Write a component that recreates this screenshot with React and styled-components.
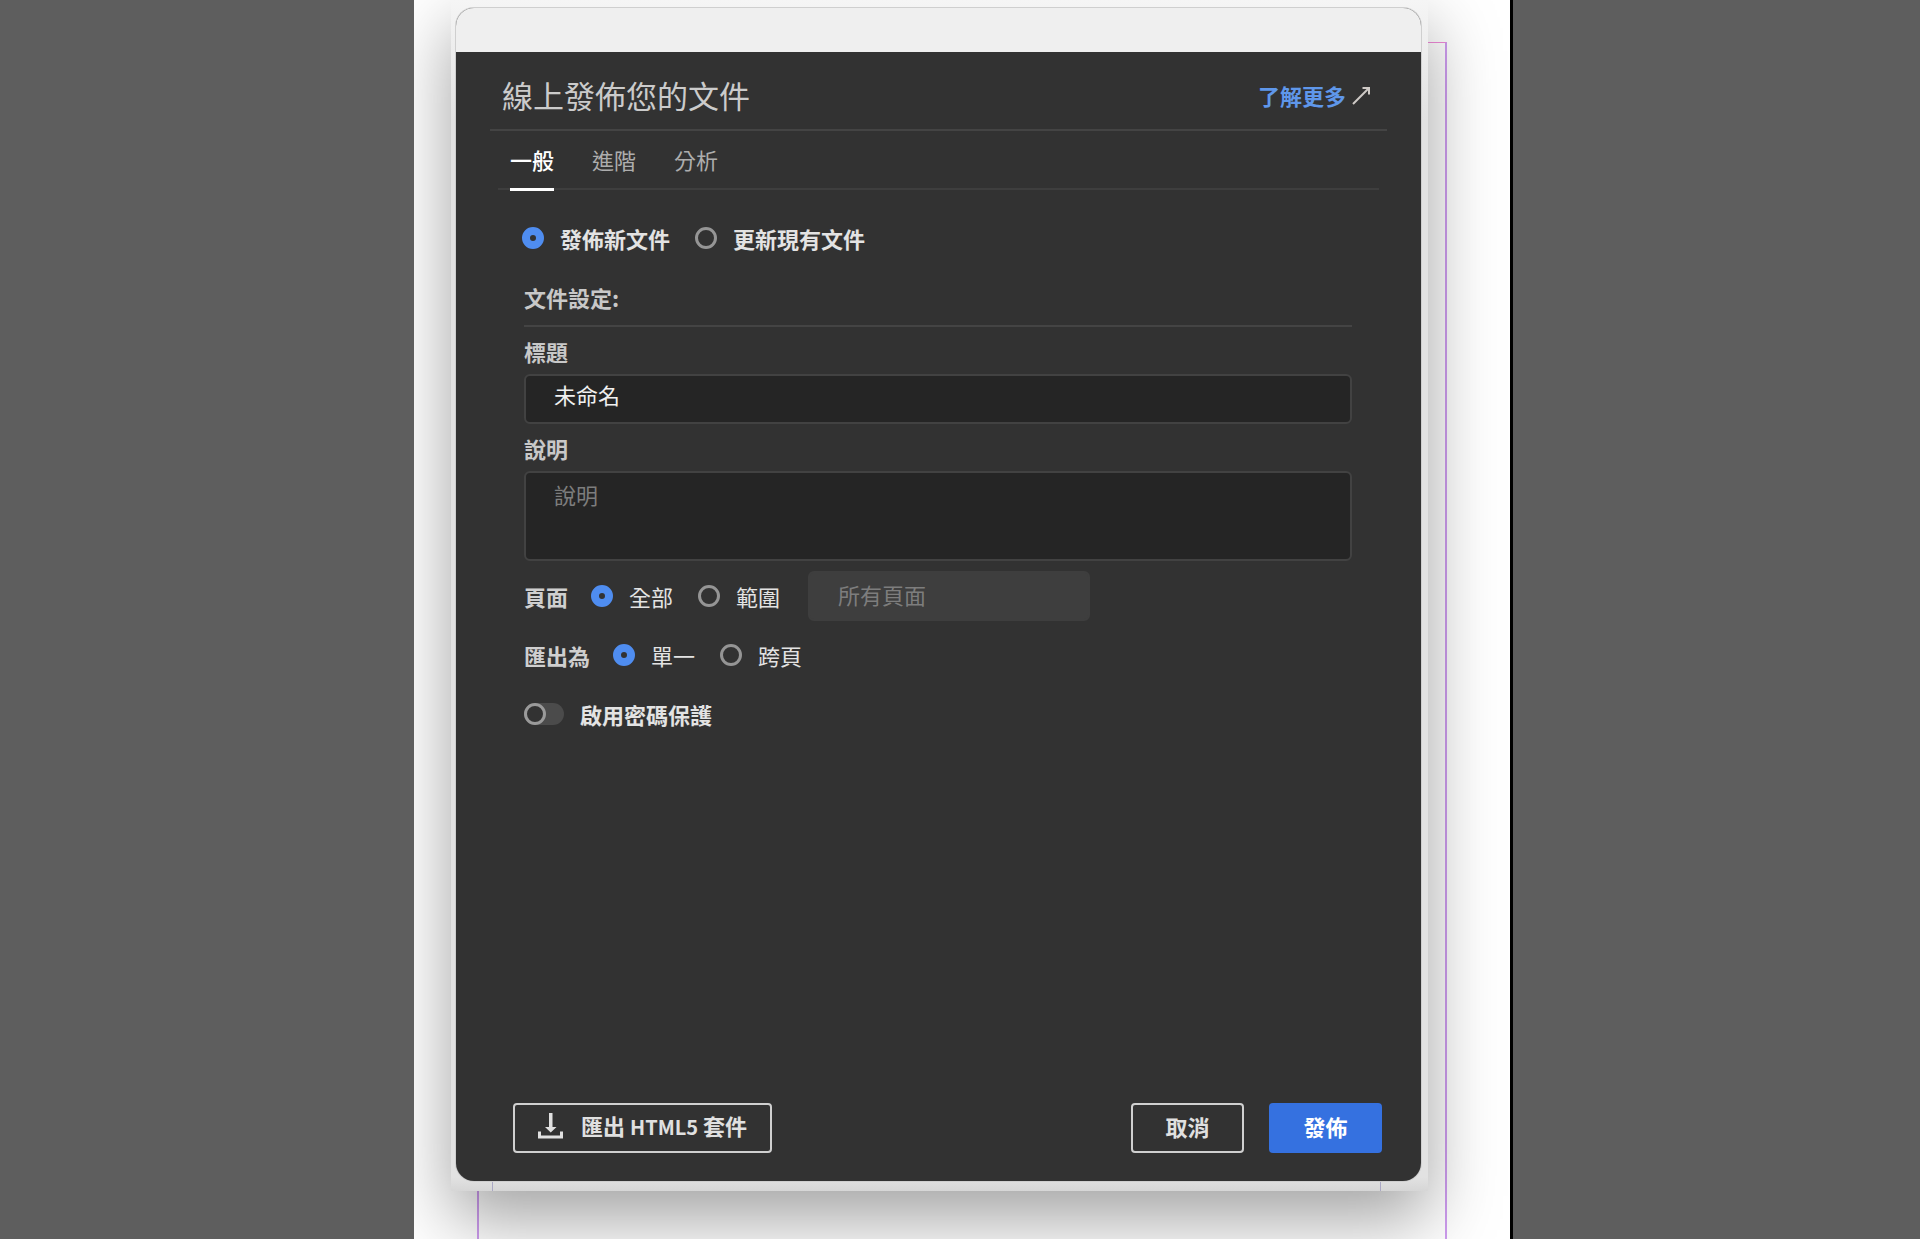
import React, { useState } from "react";
import styled, { createGlobalStyle } from 'styled-components';


const GlobalStyle = createGlobalStyle`
  *, *::before {
    box-sizing: border-box;
  }

  body {
    margin: 0;
    background: #5e5e5e;
    font-family: "Noto Sans CJK TC", "Noto Sans", sans-serif;
    font-size: 22px;
    line-height: 32px;
    color: #e3e3e3;
  }

  input, textarea, button {
    font: inherit;
    color: inherit;
    margin: 0;
  }
`;

const Workspace = styled.div`
  display: grid;
  grid-template-columns: 414fr 1099fr 407fr;
  min-height: 100vh;
`;

const Page = styled.div`
  grid-column: 2;
  position: relative;
  display: flex;
  flex-direction: column;
  overflow: hidden;
  padding: 0 82px 48px 37px;
  background: white;
  border-right: 3px solid black;
`;

// page margin guides of the open document, the dialog lies over them
const MarginGuide = styled.div`
  position: absolute;
  top: 42px;
  right: 63px;
  bottom: -4px;
  left: 63px;
  border: 2px solid #cf9df0;
  border-top: 1px solid #f08ad8;
`;

const Frame = styled.div`
  position: relative;
  flex: 1;
  display: flex;
  flex-direction: column;
  padding: 8px 7px 10px 5px;
  background: linear-gradient(#f5f5f5, #e2e2e2 120px, #e2e2e2 calc(100% - 14px), #d6d6d6);
  box-shadow: 0 28px 66px rgba(0, 0, 0, 0.37);
`;

const ColumnGuides = styled.div`
  position: absolute;
  right: 47px;
  bottom: 0;
  left: 41px;
  height: 10px;
  border: solid #aaa8c4;
  border-width: 0 1px;
`;

const Dialog = styled.section`
  flex: 1;
  display: flex;
  flex-direction: column;
  position: relative;
  border-radius: 18px;
  overflow: hidden;
  background: #323232;
  box-shadow: 0 0 0 1px #cfcfcf;
`;

const TitleBar = styled.div`
  height: 44px;
  background: #efefef;
`;

const Body = styled.div`
  flex: 1;
  display: flex;
  flex-direction: column;
  padding: 0 34px 28px;
`;

const Header = styled.header`
  display: flex;
  justify-content: space-between;
  align-items: center;
  padding: 19px 16px 10px 12px;
  border-bottom: 2px solid #444444;
`;

const Title = styled.h1`
  margin: 0;
  font-size: 31px;
  font-weight: 400;
  line-height: 48px;
  color: #cbcbcb;
`;

const LearnMore = styled.a`
  display: flex;
  align-items: center;
  gap: 6px;
  color: #5f97ea;
  font-weight: 700;
  text-decoration: none;
`;

const Tabs = styled.div`
  display: flex;
  gap: 38px;
  margin: 0 8px;
  padding: 0 12px;
  border-bottom: 2px solid #3e3e3e;
`;

const Tab = styled.button`
  margin-bottom: -3px;
  padding: 12px 0 13px;
  border: 0;
  border-bottom: 3px solid ${props => props.$active ? "white" : "transparent"};
  background: none;
  color: ${props => props.$active ? "white" : "#adadad"};
  font-weight: ${props => props.$active ? 500 : 400};
`;

const Form = styled.form`
  flex: 1;
  display: flex;
  flex-direction: column;
`;

const Mode = styled.div`
  display: flex;
  gap: 25px;
  margin: 32px 32px 0;
`;

const Settings = styled.div`
  padding: 0 35px 0 34px;
`;

const SectionTitle = styled.h2`
  margin: 27px 0 0;
  padding-bottom: 12px;
  border-bottom: 2px solid #444444;
  font-size: 22px;
  font-weight: 700;
  line-height: 32px;
  color: #c8c8c8;
`;

const FieldLabel = styled.label`
  display: block;
  margin: 8px 0 7px;
  font-weight: 700;
  color: #c8c8c8;
`;

const TextInput = styled.input`
  display: block;
  width: 100%;
  height: 50px;
  padding: 0 28px 10px;
  border: 2px solid #424242;
  border-radius: 6px;
  background: #252525;
  color: #f0f0f0;
`;

const TextArea = styled.textarea`
  display: block;
  width: 100%;
  height: 90px;
  padding: 5px 28px;
  border: 2px solid #424242;
  border-radius: 6px;
  background: #252525;
  resize: none;

  &::placeholder {
    color: #7d7d7d;
  }
`;

const RangeInput = styled(TextInput)`
  width: 282px;
  margin-left: 3px;
  padding-bottom: 4px;
  border-color: #3e3e3e;
  background: #3e3e3e;

  &::placeholder {
    color: #7d7d7d;
  }
`;

const Row = styled.div`
  display: flex;
  align-items: center;
  gap: 25px;
  margin-top: ${props => props.$top}px;
`;

const RowLabel = styled.span`
  margin-right: -2px;
  font-weight: 700;
  color: #cfcfcf;
`;

const RadioLabel = styled.label`
  display: flex;
  align-items: center;
  gap: 16px;
  font-weight: ${props => props.$bold ? 700 : 400};
`;

const RadioInput = styled.input`
  appearance: none;
  width: 22px;
  height: 22px;
  border: 3px solid #959595;
  border-radius: 50%;

  &:checked {
    border: 8px solid #4f8df0;
  }
`;

const SwitchLabel = styled.label`
  display: flex;
  align-items: center;
  gap: 16px;
  margin-top: 27px;
  font-weight: 700;
`;

const SwitchInput = styled.input`
  appearance: none;
  display: flex;
  width: 40px;
  height: 22px;
  border-radius: 11px;
  background: #4b4b4b;

  &::before {
    content: "";
    width: 22px;
    height: 22px;
    border: 3px solid #9a9a9a;
    border-radius: 50%;
    background: #323232;
  }

  &:checked {
    justify-content: flex-end;
    background: #4f8df0;
  }
`;

const Footer = styled.footer`
  display: flex;
  gap: 25px;
  margin: auto 5px 0 23px;
`;

const Button = styled.button`
  display: flex;
  align-items: center;
  justify-content: center;
  gap: 18px;
  min-width: 113px;
  height: 50px;
  padding: 0 23px 5px;
  border: 2px solid ${props => props.$primary ? "#3571e0" : "#d0d0d0"};
  border-radius: 4px;
  background: ${props => props.$primary ? "#3571e0" : "transparent"};
  color: ${props => props.$primary ? "white" : "#e0e0e0"};
  font-weight: 700;
`;

const ExportButton = styled(Button)`
  margin-right: auto;
`;

const Latin = styled.span`
  font-size: 20px;
`;

const ArrowIcon = () => (
    <svg width="19" height="19" viewBox="0 0 19 19" fill="none" stroke="#cfcac6" strokeWidth="2" aria-hidden="true">
        <path d="M1 18L17 2" />
        <path d="M10.500 2H17V8.500" />
    </svg>
);

const DownloadIcon = () => (
    <svg width="25" height="26" viewBox="0 0 25 26" fill="#e0e0e0" aria-hidden="true">
        <path d="M11 0H14.500V14H18.500L12.750 19.500L7 14H11Z" />
        <path d="M0 18.500H3V22.500H22V18.500H25V25.500H0Z" />
    </svg>
);

const Radio = ({ name, value, current, onChange, bold, children }) => (
    <RadioLabel $bold={bold}>
        <RadioInput
            type="radio"
            name={name}
            value={value}
            checked={current === value}
            onChange={() => onChange(value)}
        />
        {children}
    </RadioLabel>
);

const TABS = ['一般', '進階', '分析'];

const App = () => {
    const [tab, setTab] = useState('一般');
    const [mode, setMode] = useState('new');
    const [title, setTitle] = useState('未命名');
    const [pages, setPages] = useState('all');
    const [exportAs, setExportAs] = useState('single');

    return (
    <Workspace>
    <GlobalStyle />
    <Page>
        <MarginGuide />
        <Frame>
            <ColumnGuides />
            <Dialog role="dialog" aria-labelledby="dialog-title">
                <TitleBar />
                <Body>
                    <Header>
                        <Title id="dialog-title">線上發佈您的文件</Title>
                        <LearnMore href="#learn">了解更多<ArrowIcon /></LearnMore>
                    </Header>

                    <Tabs role="tablist">
                        {TABS.map(name => (
                            <Tab
                                key={name}
                                type="button"
                                role="tab"
                                aria-selected={tab === name}
                                $active={tab === name}
                                onClick={() => setTab(name)}
                            >
                                {name}
                            </Tab>
                        ))}
                    </Tabs>

                    <Form onSubmit={e => e.preventDefault()}>
                        <Mode>
                            <Radio name="mode" value="new" current={mode} onChange={setMode} bold>發佈新文件</Radio>
                            <Radio name="mode" value="update" current={mode} onChange={setMode} bold>更新現有文件</Radio>
                        </Mode>

                        <Settings>
                            <SectionTitle>文件設定:</SectionTitle>

                            <FieldLabel htmlFor="title">標題</FieldLabel>
                            <TextInput id="title" value={title} onChange={e => setTitle(e.target.value)} />

                            <FieldLabel htmlFor="description">說明</FieldLabel>
                            <TextArea id="description" placeholder="說明" />

                            <Row $top={10} role="radiogroup" aria-labelledby="pages-label">
                                <RowLabel id="pages-label">頁面</RowLabel>
                                <Radio name="pages" value="all" current={pages} onChange={setPages}>全部</Radio>
                                <Radio name="pages" value="range" current={pages} onChange={setPages}>範圍</Radio>
                                <RangeInput aria-labelledby="pages-label" placeholder="所有頁面" disabled={pages === 'all'} />
                            </Row>

                            <Row $top={18} role="radiogroup" aria-labelledby="export-label">
                                <RowLabel id="export-label">匯出為</RowLabel>
                                <Radio name="export" value="single" current={exportAs} onChange={setExportAs}>單一</Radio>
                                <Radio name="export" value="spread" current={exportAs} onChange={setExportAs}>跨頁</Radio>
                            </Row>

                            <SwitchLabel>
                                <SwitchInput type="checkbox" role="switch" />
                                啟用密碼保護
                            </SwitchLabel>
                        </Settings>

                        <Footer>
                            <ExportButton type="button">
                                <DownloadIcon />
                                <span>匯出 <Latin>HTML5</Latin> 套件</span>
                            </ExportButton>
                            <Button type="button">取消</Button>
                            <Button type="submit" $primary>發佈</Button>
                        </Footer>
                    </Form>
                </Body>
            </Dialog>
        </Frame>
    </Page>
    </Workspace>
    );
}
export default App;
